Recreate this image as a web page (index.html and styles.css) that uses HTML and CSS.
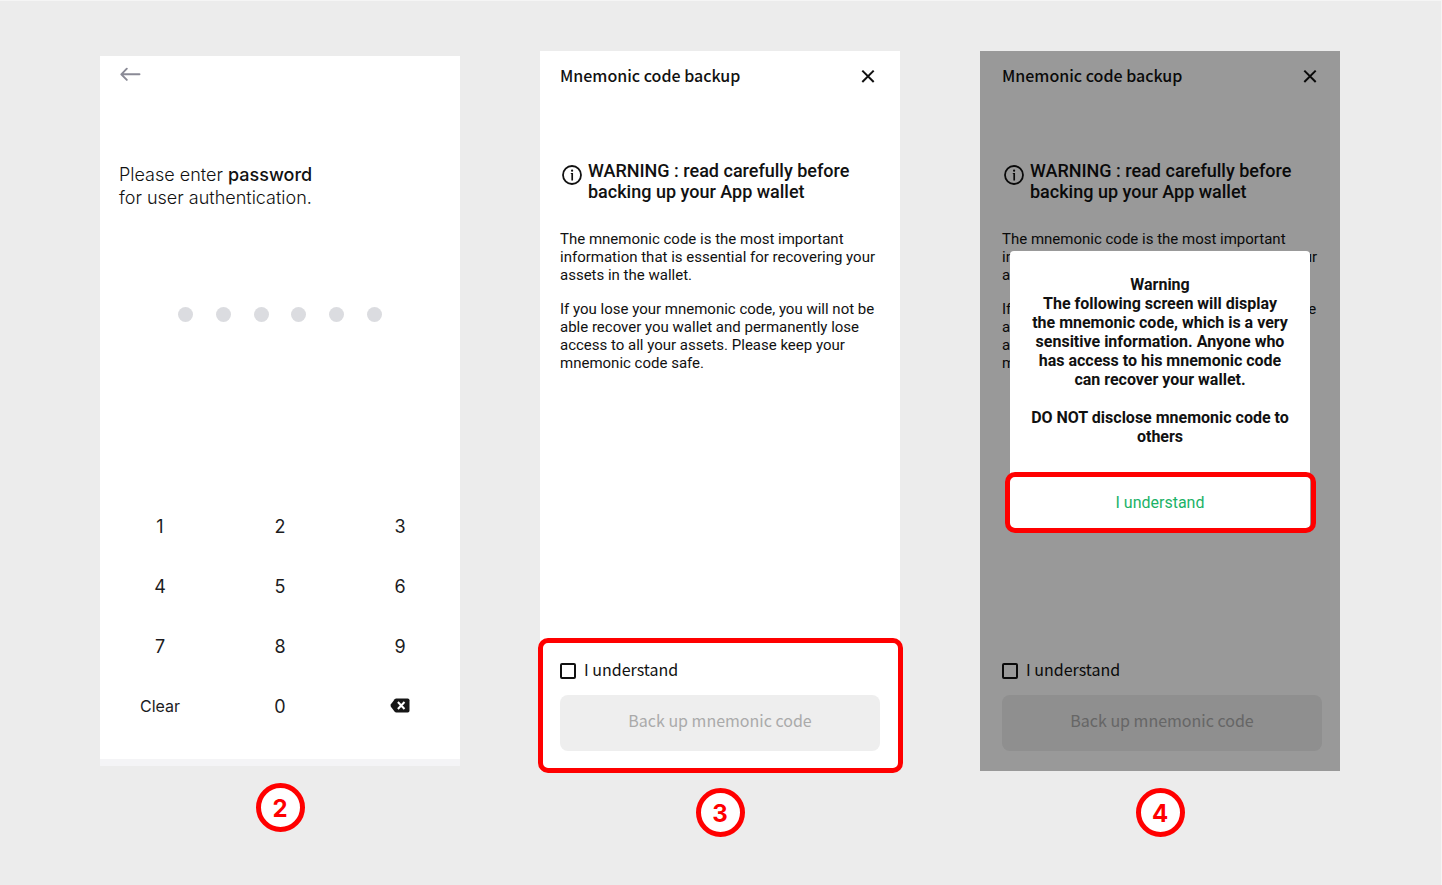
FILE: index.html
```html
<!DOCTYPE html>
<html lang="en">
<head>
<meta charset="utf-8">
<meta name="viewport" content="width=device-width, initial-scale=1">
<title>Mnemonic code backup</title>
<link rel="stylesheet" href="styles.css">
</head>
<body>
<main class="board">
  <section class="step step-auth">
    <div class="phone phone-auth">
      <header class="auth-bar">
        <button class="icon-button" type="button" aria-label="Back">
          <svg width="21" height="14" viewBox="0 0 21 14" fill="none" stroke="#8a8a96" stroke-width="1.900" stroke-linecap="round" stroke-linejoin="round"><path d="M19.500 7.300H1.500M6.800 1.700L1.300 7.300L6.800 12.900"/></svg>
        </button>
      </header>
      <p class="prompt">Please enter <strong>password</strong><br>for user authentication.</p>
      <div class="dots" role="img" aria-label="0 of 6 digits entered">
        <span class="dot"></span><span class="dot"></span><span class="dot"></span><span class="dot"></span><span class="dot"></span><span class="dot"></span>
      </div>
      <div class="keypad">
        <button class="key" type="button">1</button>
        <button class="key" type="button">2</button>
        <button class="key" type="button">3</button>
        <button class="key" type="button">4</button>
        <button class="key" type="button">5</button>
        <button class="key" type="button">6</button>
        <button class="key" type="button">7</button>
        <button class="key" type="button">8</button>
        <button class="key" type="button">9</button>
        <button class="key key-clear" type="button">Clear</button>
        <button class="key" type="button">0</button>
        <button class="key" type="button" aria-label="Delete">
          <svg width="20" height="16" viewBox="0 0 20 16"><path d="M6.200 0.500H17.700Q19.500 0.500 19.500 2.300V12.700Q19.500 14.500 17.700 14.500H6.200Q5.300 14.500 4.700 13.800L0.900 8.700Q0.200 7.500 0.900 6.300L4.700 1.200Q5.300 0.500 6.200 0.500Z" fill="#161616"/><path d="M7.900 4L14.500 11M14.500 4L7.900 11" stroke="#fff" stroke-width="2" fill="none"/></svg>
        </button>
      </div>
    </div>
    <div class="badge">2</div>
  </section>

  <section class="step">
    <div class="phone">
      <header class="title-bar">
        <h1 class="title">Mnemonic code backup</h1>
        <button class="icon-button" type="button" aria-label="Close">
          <svg width="14" height="14" viewBox="0 0 14 14" fill="none" stroke="#111" stroke-width="2"><path d="M1.300 1.600L12.700 13M12.700 1.600L1.300 13"/></svg>
        </button>
      </header>
      <div class="content">
        <div class="notice">
          <svg class="notice-icon" width="20" height="20" viewBox="0 0 20 20" fill="none" stroke="#111"><circle cx="10" cy="10" r="9" stroke-width="1.800"/><path d="M10.200 8V15.500" stroke-width="1.700"/><path d="M8.800 8.500H10.200" stroke-width="1"/><circle cx="10.100" cy="5.700" r="1.100" fill="#111" stroke="none"/></svg>
          <h2 class="notice-title">WARNING : read carefully before backing up your App wallet</h2>
        </div>
        <p class="text">The mnemonic code is the most important information that is essential for recovering your assets in the wallet.</p>
        <p class="text">If you lose your mnemonic code, you will not be able recover you wallet and permanently lose access to all your assets. Please keep your mnemonic code safe.</p>
      </div>
      <footer class="actions">
        <label class="agree"><input class="box" type="checkbox"><span class="agree-text">I understand</span></label>
        <button class="submit" type="button" disabled>Back up mnemonic code</button>
        <div class="highlight highlight-actions"></div>
      </footer>
    </div>
    <div class="badge">3</div>
  </section>

  <section class="step">
    <div class="phone phone-dimmed">
      <header class="title-bar">
        <h1 class="title">Mnemonic code backup</h1>
        <button class="icon-button" type="button" aria-label="Close">
          <svg width="14" height="14" viewBox="0 0 14 14" fill="none" stroke="#111" stroke-width="2"><path d="M1.300 1.600L12.700 13M12.700 1.600L1.300 13"/></svg>
        </button>
      </header>
      <div class="content">
        <div class="notice">
          <svg class="notice-icon" width="20" height="20" viewBox="0 0 20 20" fill="none" stroke="#111"><circle cx="10" cy="10" r="9" stroke-width="1.800"/><path d="M10.200 8V15.500" stroke-width="1.700"/><path d="M8.800 8.500H10.200" stroke-width="1"/><circle cx="10.100" cy="5.700" r="1.100" fill="#111" stroke="none"/></svg>
          <h2 class="notice-title">WARNING : read carefully before backing up your App wallet</h2>
        </div>
        <p class="text">The mnemonic code is the most important information that is essential for recovering your assets in the wallet.</p>
        <p class="text">If you lose your mnemonic code, you will not be able recover you wallet and permanently lose access to all your assets. Please keep your mnemonic code safe.</p>
      </div>
      <footer class="actions">
        <label class="agree"><input class="box" type="checkbox"><span class="agree-text">I understand</span></label>
        <button class="submit" type="button" disabled>Back up mnemonic code</button>
      </footer>
      <div class="overlay">
        <div class="dialog" role="dialog" aria-label="Warning">
          <div class="dialog-body">
            <p>Warning<br>The following screen will display the mnemonic code, which is a very sensitive information. Anyone who has access to his mnemonic code can recover your wallet.</p>
            <p>DO NOT disclose mnemonic code to others</p>
          </div>
          <div class="dialog-footer">
            <button class="dialog-button" type="button">I understand</button>
            <div class="highlight highlight-dialog"></div>
          </div>
        </div>
      </div>
    </div>
    <div class="badge">4</div>
  </section>
</main>
</body>
</html>
```
FILE: styles.css
```css
* {
  box-sizing: border-box;
}

body {
  margin: 0;
  min-height: 100vh;
  background: #ececec;
  border-top: 1px solid #f5f5f5;
  border-right: 1px solid #f5f5f5;
  color: #111;
  font-family: Roboto, "Liberation Sans", sans-serif;
}

h1, h2, p {
  margin: 0;
}

button {
  border: 0;
  padding: 0;
  background: none;
  color: inherit;
  font: inherit;
}

svg {
  display: block;
}

.board {
  display: grid;
  grid-template-columns: repeat(3, minmax(0, 1fr));
  gap: 80px;
  padding: 50px 101px 48px 100px;
}

.step {
  display: flex;
  flex-direction: column;
  align-items: center;
  gap: 17px;
}

.step-auth {
  padding-top: 5px;
}

.phone {
  position: relative;
  display: flex;
  flex-direction: column;
  width: 100%;
  min-height: 720px;
  padding: 0 20px 20px;
  background: #fff;
}

.icon-button {
  display: flex;
  align-items: center;
  justify-content: center;
  height: 24px;
}

/* Password entry */

.phone-auth {
  min-height: 710px;
  padding: 0;
  border-bottom: 7px solid #f4f4f6;
  font-family: Inter, "Liberation Sans", sans-serif;
  color: #1c1c1e;
}

.auth-bar {
  display: flex;
  padding: 6px 20px 0;
}

.prompt {
  padding: 77px 19px 0;
  color: #111;
  font-size: 18px;
  font-weight: 300;
  line-height: 23px;
}

.prompt strong {
  font-weight: 500;
}

.dots {
  display: flex;
  justify-content: space-between;
  width: 204px;
  margin: 98px auto 0;
}

.dot {
  width: 15px;
  height: 15px;
  border-radius: 50%;
  background: #dbdce0;
}

.keypad {
  display: grid;
  grid-template-columns: repeat(3, 1fr);
  grid-auto-rows: 60px;
  margin-top: auto;
  padding-bottom: 23px;
}

.key {
  display: flex;
  align-items: center;
  justify-content: center;
  font-size: 18px;
}

.key-clear {
  font-size: 16px;
}

/* Backup notice */

.title-bar {
  display: flex;
  align-items: center;
  justify-content: space-between;
  padding: 12px 5px 0 0;
}

.title {
  padding-bottom: 2px;
  font: 500 16px/24px "Noto Sans CJK KR", "Noto Sans", sans-serif;
}

.content {
  flex: 1;
  padding-top: 71px;
}

.notice {
  display: flex;
  gap: 6px;
  padding-left: 2px;
  margin-bottom: 28px;
}

.notice-icon {
  flex: none;
  margin-top: 5px;
}

.notice-title {
  font-size: 18px;
  font-weight: 500;
  line-height: 21px;
}

.text {
  font-size: 15px;
  line-height: 18px;
}

.text + .text {
  margin-top: 16px;
}

.actions {
  position: relative;
  display: flex;
  flex-direction: column;
  gap: 11px;
  font: 400 16px/24px "Noto Sans CJK KR", "Noto Sans", sans-serif;
}

.agree {
  display: flex;
  align-items: center;
  gap: 8px;
}

.agree-text {
  padding-bottom: 3px;
}

.box {
  appearance: none;
  width: 16px;
  height: 16px;
  margin: 0;
  border: 2px solid #111;
  border-radius: 2px;
}

.submit {
  height: 56px;
  border-radius: 8px;
  padding-bottom: 6px;
  background: #eee;
  color: #aaa;
}

/* Confirmation dialog */

.phone-dimmed {
  padding: 0 18px 20px 22px;
}

.overlay {
  position: absolute;
  inset: 0;
  padding: 200px 30px 0;
  background: rgba(0, 0, 0, 0.4);
}

.dialog {
  border-radius: 4px;
  background: #fff;
}

.dialog-body {
  display: flex;
  flex-direction: column;
  gap: 19px;
  padding: 24px 20px 26px;
  font-size: 16px;
  font-weight: 700;
  line-height: 19px;
  text-align: center;
}

.dialog-footer {
  position: relative;
  display: flex;
}

.dialog-button {
  flex: 1;
  height: 56px;
  padding-top: 4px;
  color: #1bb267;
  font-size: 16px;
}

/* Step markers */

.highlight {
  position: absolute;
  border: 5px solid #f00;
  border-radius: 10px;
  pointer-events: none;
}

.highlight-actions {
  inset: -19px -23px -22px -22px;
}

.highlight-dialog {
  inset: 0 -6px -5px -5px;
}

.badge {
  display: flex;
  align-items: center;
  justify-content: center;
  width: 49px;
  height: 49px;
  padding-top: 2px;
  border: 5px solid #f00;
  border-radius: 50%;
  background: #fff;
  color: #f00;
  font: 700 24px/28px Inter, "Liberation Sans", sans-serif;
}
```
